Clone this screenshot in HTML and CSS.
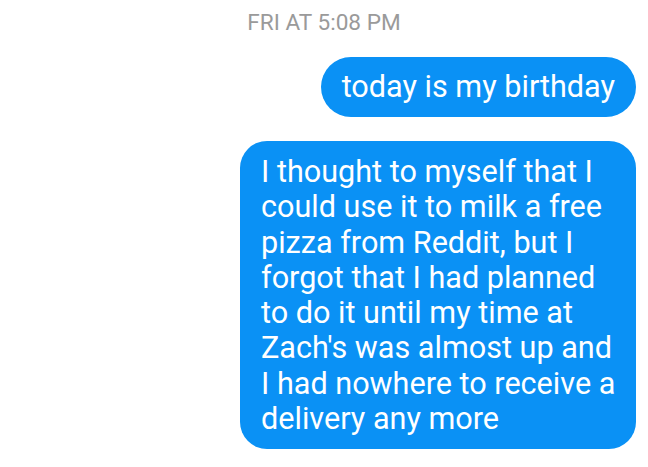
FILE: index.html
```html
<!DOCTYPE html>
<html>
<head>
<meta charset="utf-8">
<link rel="stylesheet" href="styles.css">
</head>
<body>
<div class="thread">
  <div class="stamp">FRI AT 5:08 PM</div>
  <div class="msgs">
    <div class="bubble pill">today is my birthday</div>
    <div class="bubble block">I thought to myself that I could use it to milk a free pizza from Reddit, but I forgot that I had planned to do it until my time at Zach's was almost up and I had nowhere to receive a delivery any more</div>
  </div>
</div>
</body>
</html>
```
FILE: styles.css
```css
html, body {
  margin: 0;
  padding: 0;
  background: #ffffff;
}
.thread {
  font-family: Roboto, "Noto Sans", sans-serif;
  width: 648px;
  height: 467px;
  box-sizing: border-box;
  padding-top: 10px;
}
.stamp {
  text-align: center;
  color: #9a9a9a;
  font-size: 22.6px;
  line-height: 26px;
}
.msgs {
  display: flex;
  flex-direction: column;
  align-items: flex-end;
  gap: 24px;
  padding-right: 12px;
  margin-top: 21px;
}
.bubble {
  background: #0a91f5;
  color: #ffffff;
  font-size: 30.6px;
  box-sizing: border-box;
}
.pill {
  height: 60px;
  line-height: 60px;
  padding: 0 21px;
  border-radius: 30px;
}
.block {
  width: 396px;
  padding: 13px 17px 13px 21px;
  line-height: 35.3px;
  border-radius: 27px;
}
```
